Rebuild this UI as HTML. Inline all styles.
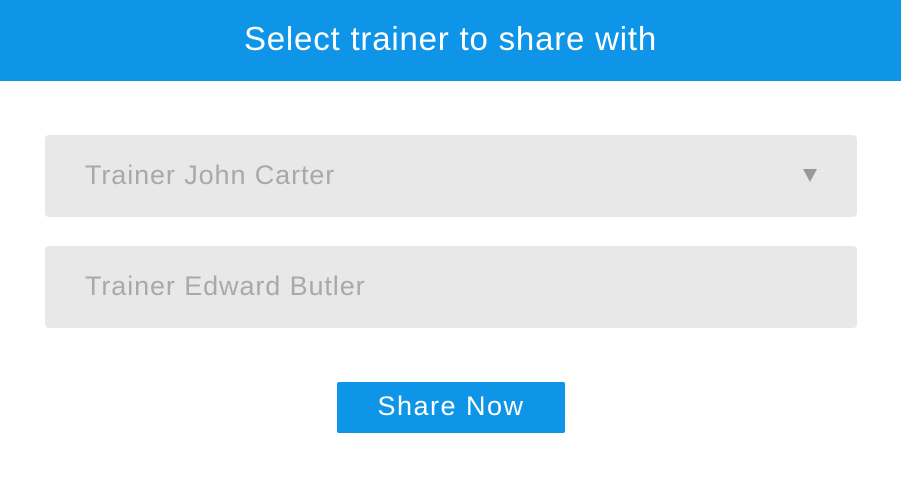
<!DOCTYPE html>
<html><head><style>
body{margin:0;width:901px;height:491px;background:#fff;font-family:"Liberation Sans",sans-serif;position:relative;overflow:hidden}
.hdr{position:absolute;left:0;top:0;width:901px;height:81px;background:#0e95e8;color:#fff;font-size:33px;text-align:center;line-height:78px;letter-spacing:0.8px}
.f{position:absolute;left:45px;width:812px;height:82px;background:#e8e8e8;border-radius:4px;color:#a9a9a9;font-size:27px;line-height:80px;box-sizing:border-box;padding-left:40px;letter-spacing:0.9px}
.arr{position:absolute;right:40px;top:34px;width:0;height:0;border-left:7px solid transparent;border-right:7px solid transparent;border-top:13px solid #999}
.btn{position:absolute;left:337px;top:382px;width:228px;height:51px;background:#0e95e8;border-radius:2px;color:#fff;font-size:27px;text-align:center;line-height:49px;letter-spacing:1.5px}
</style></head><body>
<div class="hdr">Select trainer to share with</div>
<div class="f" style="top:135px">Trainer John Carter<div class="arr"></div></div>
<div class="f" style="top:246px">Trainer Edward Butler</div>
<div class="btn">Share Now</div>
</body></html>
